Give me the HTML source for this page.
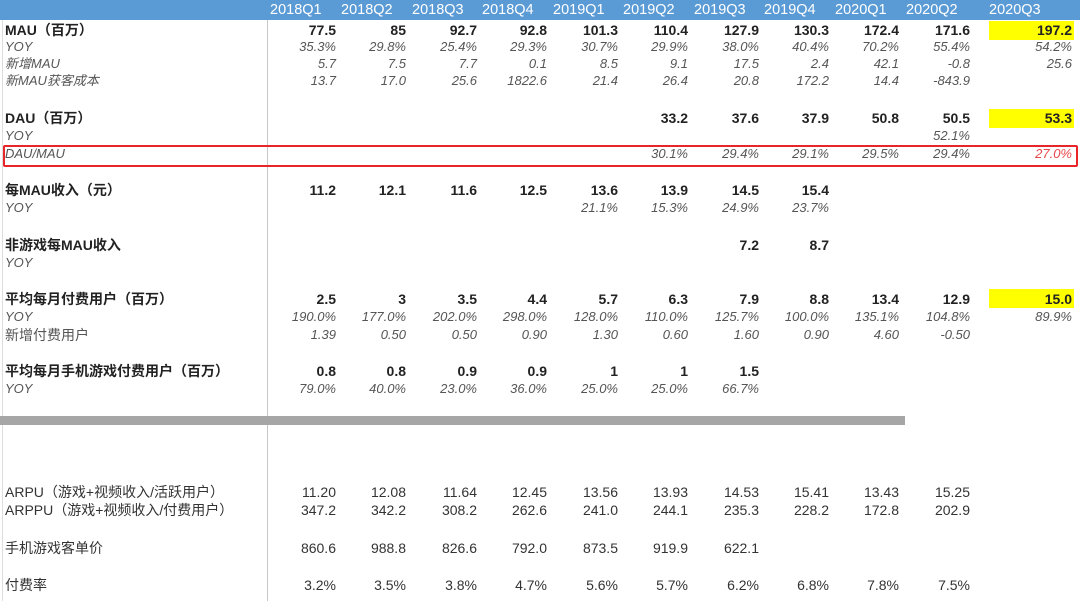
<!DOCTYPE html>
<html><head><meta charset="utf-8"><style>
body{margin:0;width:1080px;height:601px;background:#fff;position:relative;overflow:hidden;font-family:"Liberation Sans","Noto Sans CJK SC",sans-serif;color:#222}
.hdr{position:absolute;left:0;top:0;width:1080px;height:20px;background:#5b9bd5}
.r{position:absolute;left:0;width:1080px;height:18px;line-height:18px;font-size:13px}
.r div{position:absolute;top:0;text-align:right;width:66px}
.r .l{left:5px;text-align:left;width:260px}
.b{font-weight:bold;font-size:14px}
.i{font-style:italic;color:#555;font-size:13px}
.n{color:#333;font-size:14px}
.hdr div{position:absolute;top:0;line-height:20px;color:#fff;font-size:14.5px}
.c0{left:270px}.c1{left:340px}.c2{left:411px}.c3{left:481px}.c4{left:552px}.c5{left:622px}.c6{left:693px}.c7{left:763px}.c8{left:833px}.c9{left:904px}.c10{left:1006px}
.y{position:absolute;background:#ffff00;left:989px;width:85px;height:19px}
</style></head><body>
<div style="position:absolute;left:267px;top:20px;width:1px;height:581px;background:#c8c8c8"></div>
<div style="position:absolute;left:2px;top:20px;width:1px;height:581px;background:#ddd"></div>
<div class="y" style="top:21px"></div>
<div class="y" style="top:109px"></div>
<div class="y" style="top:289px"></div>
<div style="position:absolute;left:0;top:416px;width:905px;height:9px;background:#a6a6a6"></div>
<div style="position:absolute;left:3px;top:145px;width:1071px;height:18px;border:2px solid #e8262a;border-radius:2px"></div>
<div class="hdr"><div style="left:270px">2018Q1</div><div style="left:341px">2018Q2</div><div style="left:412px">2018Q3</div><div style="left:482px">2018Q4</div><div style="left:553px">2019Q1</div><div style="left:623px">2019Q2</div><div style="left:694px">2019Q3</div><div style="left:764px">2019Q4</div><div style="left:835px">2020Q1</div><div style="left:906px">2020Q2</div><div style="left:989px">2020Q3</div></div>

<div class="r b" style="top:21px"><div class="l">MAU（百万）</div><div class="c0">77.5</div><div class="c1">85</div><div class="c2">92.7</div><div class="c3">92.8</div><div class="c4">101.3</div><div class="c5">110.4</div><div class="c6">127.9</div><div class="c7">130.3</div><div class="c8">172.4</div><div class="c9">171.6</div><div class="c10">197.2</div></div>
<div class="r i" style="top:38px"><div class="l">YOY</div><div class="c0">35.3%</div><div class="c1">29.8%</div><div class="c2">25.4%</div><div class="c3">29.3%</div><div class="c4">30.7%</div><div class="c5">29.9%</div><div class="c6">38.0%</div><div class="c7">40.4%</div><div class="c8">70.2%</div><div class="c9">55.4%</div><div class="c10">54.2%</div></div>
<div class="r i" style="top:55px"><div class="l">新增MAU</div><div class="c0">5.7</div><div class="c1">7.5</div><div class="c2">7.7</div><div class="c3">0.1</div><div class="c4">8.5</div><div class="c5">9.1</div><div class="c6">17.5</div><div class="c7">2.4</div><div class="c8">42.1</div><div class="c9">-0.8</div><div class="c10">25.6</div></div>
<div class="r i" style="top:72px"><div class="l">新MAU获客成本</div><div class="c0">13.7</div><div class="c1">17.0</div><div class="c2">25.6</div><div class="c3">1822.6</div><div class="c4">21.4</div><div class="c5">26.4</div><div class="c6">20.8</div><div class="c7">172.2</div><div class="c8">14.4</div><div class="c9">-843.9</div></div>

<div class="r b" style="top:109px"><div class="l">DAU（百万）</div><div class="c5">33.2</div><div class="c6">37.6</div><div class="c7">37.9</div><div class="c8">50.8</div><div class="c9">50.5</div><div class="c10">53.3</div></div>
<div class="r i" style="top:127px"><div class="l">YOY</div><div class="c9">52.1%</div></div>
<div class="r i" style="top:145px"><div class="l">DAU/MAU</div><div class="c5">30.1%</div><div class="c6">29.4%</div><div class="c7">29.1%</div><div class="c8">29.5%</div><div class="c9">29.4%</div><div class="c10" style="color:#e8474b">27.0%</div></div>

<div class="r b" style="top:181px"><div class="l">每MAU收入（元）</div><div class="c0">11.2</div><div class="c1">12.1</div><div class="c2">11.6</div><div class="c3">12.5</div><div class="c4">13.6</div><div class="c5">13.9</div><div class="c6">14.5</div><div class="c7">15.4</div></div>
<div class="r i" style="top:199px"><div class="l">YOY</div><div class="c4">21.1%</div><div class="c5">15.3%</div><div class="c6">24.9%</div><div class="c7">23.7%</div></div>

<div class="r b" style="top:236px"><div class="l">非游戏每MAU收入</div><div class="c6">7.2</div><div class="c7">8.7</div></div>
<div class="r i" style="top:254px"><div class="l">YOY</div></div>

<div class="r b" style="top:290px"><div class="l">平均每月付费用户（百万）</div><div class="c0">2.5</div><div class="c1">3</div><div class="c2">3.5</div><div class="c3">4.4</div><div class="c4">5.7</div><div class="c5">6.3</div><div class="c6">7.9</div><div class="c7">8.8</div><div class="c8">13.4</div><div class="c9">12.9</div><div class="c10">15.0</div></div>
<div class="r i" style="top:308px"><div class="l">YOY</div><div class="c0">190.0%</div><div class="c1">177.0%</div><div class="c2">202.0%</div><div class="c3">298.0%</div><div class="c4">128.0%</div><div class="c5">110.0%</div><div class="c6">125.7%</div><div class="c7">100.0%</div><div class="c8">135.1%</div><div class="c9">104.8%</div><div class="c10">89.9%</div></div>
<div class="r i" style="top:326px"><div class="l" style="font-style:normal;font-size:14px">新增付费用户</div><div class="c0">1.39</div><div class="c1">0.50</div><div class="c2">0.50</div><div class="c3">0.90</div><div class="c4">1.30</div><div class="c5">0.60</div><div class="c6">1.60</div><div class="c7">0.90</div><div class="c8">4.60</div><div class="c9">-0.50</div></div>

<div class="r b" style="top:362px"><div class="l">平均每月手机游戏付费用户（百万）</div><div class="c0">0.8</div><div class="c1">0.8</div><div class="c2">0.9</div><div class="c3">0.9</div><div class="c4">1</div><div class="c5">1</div><div class="c6">1.5</div></div>
<div class="r i" style="top:380px"><div class="l">YOY</div><div class="c0">79.0%</div><div class="c1">40.0%</div><div class="c2">23.0%</div><div class="c3">36.0%</div><div class="c4">25.0%</div><div class="c5">25.0%</div><div class="c6">66.7%</div></div>

<div class="r n" style="top:483px"><div class="l">ARPU（游戏+视频收入/活跃用户）</div><div class="c0">11.20</div><div class="c1">12.08</div><div class="c2">11.64</div><div class="c3">12.45</div><div class="c4">13.56</div><div class="c5">13.93</div><div class="c6">14.53</div><div class="c7">15.41</div><div class="c8">13.43</div><div class="c9">15.25</div></div>
<div class="r n" style="top:501px"><div class="l">ARPPU（游戏+视频收入/付费用户）</div><div class="c0">347.2</div><div class="c1">342.2</div><div class="c2">308.2</div><div class="c3">262.6</div><div class="c4">241.0</div><div class="c5">244.1</div><div class="c6">235.3</div><div class="c7">228.2</div><div class="c8">172.8</div><div class="c9">202.9</div></div>
<div class="r n" style="top:539px"><div class="l">手机游戏客单价</div><div class="c0">860.6</div><div class="c1">988.8</div><div class="c2">826.6</div><div class="c3">792.0</div><div class="c4">873.5</div><div class="c5">919.9</div><div class="c6">622.1</div></div>
<div class="r n" style="top:576px"><div class="l">付费率</div><div class="c0">3.2%</div><div class="c1">3.5%</div><div class="c2">3.8%</div><div class="c3">4.7%</div><div class="c4">5.6%</div><div class="c5">5.7%</div><div class="c6">6.2%</div><div class="c7">6.8%</div><div class="c8">7.8%</div><div class="c9">7.5%</div></div>
</body></html>
